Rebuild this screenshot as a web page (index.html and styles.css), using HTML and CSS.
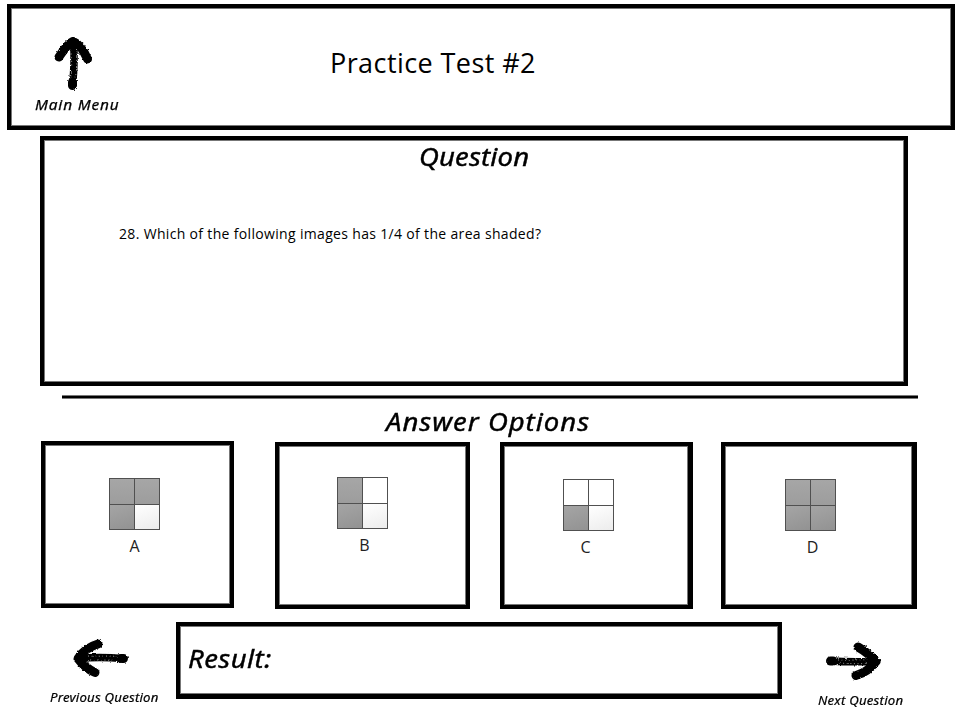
FILE: index.html
```html
<!DOCTYPE html>
<html lang="en">
<head>
<meta charset="utf-8">
<title>Practice Test #2</title>
<link rel="stylesheet" href="styles.css">
</head>
<body>
<svg class="defs" width="0" height="0" aria-hidden="true">
  <defs>
    <filter id="rough" x="-20%" y="-20%" width="140%" height="140%">
      <feTurbulence type="fractalNoise" baseFrequency="0.55" numOctaves="2" seed="4" result="n"/>
      <feDisplacementMap in="SourceGraphic" in2="n" scale="2.8" xChannelSelector="R" yChannelSelector="G"/>
    </filter>
  </defs>
</svg>
<header class="header box">
  <a class="nav menu">
    <svg width="42" height="56" viewBox="0 0 42 56">
      <g filter="url(#rough)">
        <path class="ink" d="M7 22C11 16 15 9 21 6.500C27 9 32 16 35.500 24"/>
        <path class="ink shaft" d="M21.500 7C22.500 20 22.500 32 20.500 50"/>
        <path class="ink" d="M20.500 47V50.500"/>
        <path class="speck" d="M18.500 15C20 25 20 35 19 44M24.500 14C24 24 26 33 23 43"/>
      </g>
    </svg>
    <span class="hand menu-label">Main Menu</span>
  </a>
  <h1 class="title">Practice Test #2</h1>
</header>
<main>
  <section class="question box">
    <h2 class="hand heading q-heading">Question</h2>
    <p class="prompt">28. Which of the following images has 1/4 of the area shaded?</p>
  </section>
  <hr class="rule">
  <h2 class="hand heading a-heading">Answer Options</h2>
  <section class="options">
    <div class="option box a">
      <div class="squares"><i class="on"></i><i class="on"></i><i class="on low"></i><i class="pale"></i></div>
      <span class="letter">A</span>
    </div>
    <div class="option box b">
      <div class="squares"><i class="on"></i><i></i><i class="on low"></i><i class="pale"></i></div>
      <span class="letter">B</span>
    </div>
    <div class="option box c">
      <div class="squares"><i></i><i></i><i class="on low"></i><i class="pale"></i></div>
      <span class="letter">C</span>
    </div>
    <div class="option box d">
      <div class="squares"><i class="on"></i><i class="on"></i><i class="on low"></i><i class="on low"></i></div>
      <span class="letter">D</span>
    </div>
  </section>
</main>
<footer class="footer">
  <a class="nav prev">
    <svg width="60" height="42" viewBox="0 0 60 42">
      <g filter="url(#rough)">
        <path class="ink" d="M28 7C18 10 12 15 8 21.500C12 27 17 32 25 35.500"/>
        <path class="ink shaft" d="M9 21.500C22 20 36 20 53 21.500"/>
        <path class="ink" d="M51 21.500H53.500"/>
        <path class="speck" d="M18 19C28 20 38 18 48 20M20 23C30 22 38 24 46 23"/>
      </g>
    </svg>
    <span class="hand small-label">Previous Question</span>
  </a>
  <div class="result box"><span class="hand result-label">Result:</span></div>
  <a class="nav next">
    <svg width="60" height="42" viewBox="0 0 60 42">
      <g filter="url(#rough)">
        <path class="ink" d="M36 7C43 11 49 16 54 21.500C49 28 43 33 34 35.500"/>
        <path class="ink shaft" d="M9 21C22 22 38 22 53 21.500"/>
        <path class="ink" d="M8.500 21H11"/>
        <path class="speck" d="M16 20C26 21 36 19 45 20M14 24C24 22 34 25 46 23"/>
      </g>
    </svg>
    <span class="hand small-label">Next Question</span>
  </a>
</footer>
</body>
</html>
```
FILE: styles.css
```css
* { box-sizing: border-box; }
body {
  margin: 0;
  padding-top: 4px;
  width: 960px;
  height: 720px;
  overflow: hidden;
  background: #fff;
  color: #000;
  font-family: "Trebuchet MS", "Open Sans", "Noto Sans", sans-serif;
}
h1, h2, p { margin: 0; font-weight: 400; white-space: nowrap; }
svg { display: block; }
.defs { position: absolute; }
.box { border: 4px solid #000; box-shadow: inset 0 0 0 1px #777; background: #fff; }
.hand {
  width: fit-content;
  font-family: "Segoe Print", "Noto Sans", "Open Sans", sans-serif;
  font-style: italic;
  font-weight: 400;
  -webkit-text-stroke: .4px #000;
  white-space: nowrap;
  transform: scaleX(1.1);
  transform-origin: left center;
}
.ink { fill: none; stroke: #000; stroke-width: 9; stroke-linecap: round; stroke-linejoin: round; }
.shaft { stroke-width: 7.500; }
.speck { fill: none; stroke: #fff; stroke-width: .8; stroke-dasharray: 1 2.600; opacity: .75; }

.header { display: flex; margin-left: 7px; width: 948px; height: 126px; }
.nav { display: flex; flex-direction: column; }
.menu { width: 319px; padding: 27px 0 0 24px; }
.menu svg { margin-left: 17px; }
.menu-label { font-size: 14px; line-height: 20px; letter-spacing: .75px; margin-top: 4px; -webkit-text-stroke-width: .25px; }
.title { padding-top: 36px; font-size: 27px; line-height: 38px; letter-spacing: .42px; }

.question { margin: 6px 0 0 40px; width: 868px; height: 250px; }
.q-heading { margin: -1px 0 0 375px; }
.heading { font-size: 25px; line-height: 34px; letter-spacing: .15px; }
.prompt { margin: 51px 0 0 75px; font-size: 14px; line-height: 20px; letter-spacing: .33px; }
.rule { margin: 9px 0 0 62px; width: 856px; height: 4px; border: solid #777; border-width: 1px 0; background: #000; }
.a-heading { margin: 5px 0 0 386px; height: 37px; letter-spacing: .9px; }

.options { display: flex; align-items: flex-start; height: 181px; padding-left: 41px; }
.option { height: 167px; display: flex; flex-direction: column; align-items: flex-start; }
.squares {
  display: grid;
  grid-template: 25px 24px / 24px 24px;
  gap: 1px;
  padding: 1px;
  width: 51px;
  height: 52px;
  background: #505050;
}
.squares i { background: #fff; }
.squares .on { background: linear-gradient(#a6a6a6, #9d9d9d); }
.squares .low { background: linear-gradient(160deg, #a5a5a5, #929292); }
.squares .pale { background: linear-gradient(160deg, #fff, #ececec); }
.letter { width: 51px; text-align: center; font: 16px/20px "Open Sans", sans-serif; color: #222; margin-top: 6px; }
.a { width: 193px; margin-top: 0; padding: 33px 0 0 64px; }
.b { width: 195px; margin: 1px 0 0 41px; padding: 31px 0 0 58px; }
.c { width: 193px; margin: 1px 0 0 30px; padding: 33px 0 0 59px; border-right-width: 5px; }
.d { width: 196px; margin: 1px 0 0 28px; padding: 33px 0 0 60px; border-right-width: 5px; }
.b .letter { padding-left: 4px; }
.c .letter { padding-right: 6px; }
.d .letter { padding-left: 4px; }

.footer { display: flex; align-items: flex-start; }
.prev { width: 136px; margin-left: 40px; padding: 15px 0 0 10px; }
.prev svg { margin-left: 20px; }
.small-label { font-size: 12px; line-height: 16px; margin-top: 11px; letter-spacing: .2px; -webkit-text-stroke-width: .2px; }
.result { width: 606px; height: 77px; border-bottom-width: 5px; padding: 15px 0 0 8px; }
.result-label { display: block; font-size: 25px; line-height: 34px; letter-spacing: .4px; }
.next { padding: 18px 0 0 36px; }
.next svg { margin-left: 4px; }
```
